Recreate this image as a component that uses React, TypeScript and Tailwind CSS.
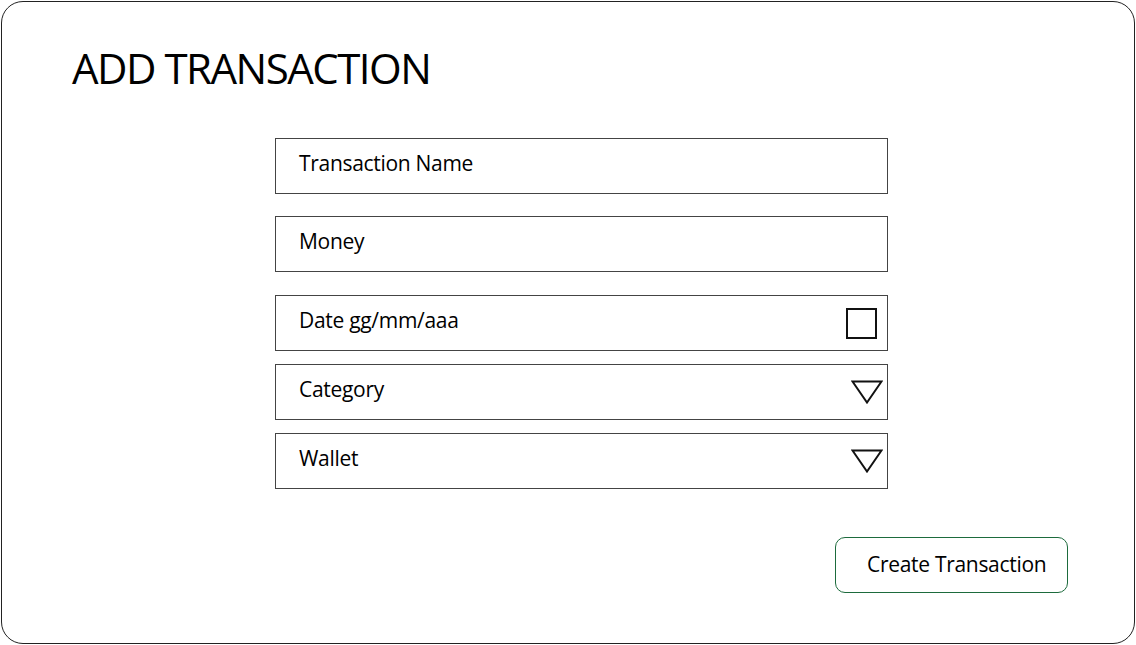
const fields = [
  { label: "Transaction Name", kind: "text" },
  { label: "Money", kind: "text" },
  { label: "Date gg/mm/aaa", kind: "date" },
  { label: "Category", kind: "select" },
  { label: "Wallet", kind: "select" },
];

function Triangle() {
  return (
    <svg width="32" height="24" viewBox="0 0 32 24" className="shrink-0">
      <polygon points="1.5,1.5 30.5,1.5 16,22.5" fill="none" stroke="#111" strokeWidth="2" />
    </svg>
  );
}

export default function App() {
  return (
    <div className="w-[1136px] h-[645px] bg-white p-px font-['Open_Sans',sans-serif] text-black">
      <div className="h-full w-full rounded-[22px] border border-[#222] px-[70px] pt-[36px]">
        <h1 className="text-[42px] leading-[60px] tracking-[-1.5px]">ADD TRANSACTION</h1>

        <div className="ml-[203px] mt-[40px] flex w-[613px] flex-col">
          {fields.map((f, i) => (
            <div
              key={f.label}
              className={
                "flex h-[56px] items-center justify-between border border-[#444] pl-[23px] pb-[4px] " +
                (f.kind === "select" ? "pr-[4px] " : "pr-[10px] ") +
                (i === 1 ? "mt-[22px] " : i === 2 ? "mt-[23px] " : i > 2 ? "mt-[13px] " : "")
              }
            >
              <span className="text-[21px] tracking-[-0.3px]">{f.label}</span>
              {f.kind === "date" && <div className="mt-[4px] h-[31px] w-[31px] border-2 border-[#111]" />}
              {f.kind === "select" && <div className="mt-[4px]"><Triangle /></div>}
            </div>
          ))}
        </div>

        <div className="mt-[48px] flex justify-end">
          <button className="mr-[-4px] h-[56px] w-[233px] rounded-[10px] border border-[#1d6b3d] pl-[31px] text-left text-[21px] tracking-[-0.3px]">
            Create Transaction
          </button>
        </div>
      </div>
    </div>
  );
}
